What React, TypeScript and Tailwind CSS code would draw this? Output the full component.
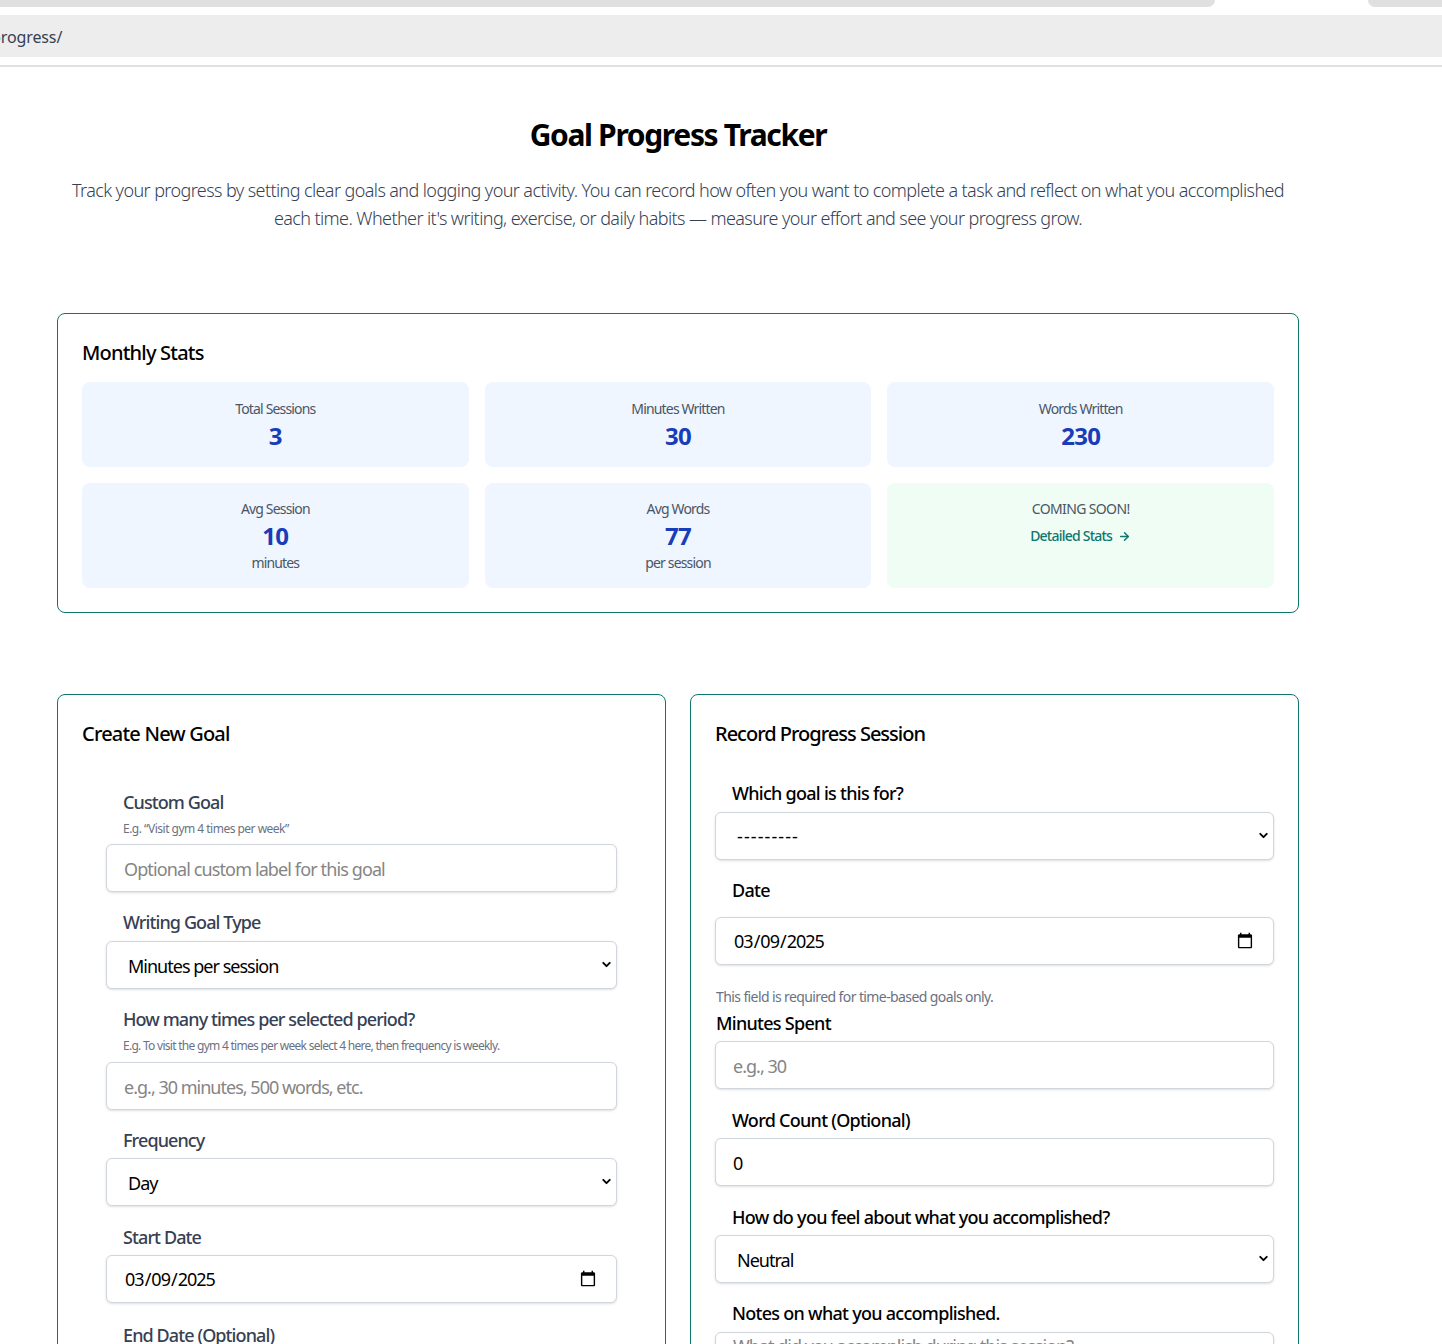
import { ArrowRight, ChevronDown } from "lucide-react";
import type { ReactNode } from "react";

const font = { fontFamily: '"Noto Sans", "Open Sans", sans-serif' };

const fieldBase =
    "block w-full h-12 px-[17px] bg-white border border-gray-300 rounded-md shadow-sm text-[18px] text-black outline-0 placeholder:text-[#858585]";
const fieldClass = `${fieldBase} tracking-[-0.055em]`;
const inputClass = `${fieldClass} pt-[2px]`;

function StatCard({ label, value, sub }: { label: string; value: string; sub?: string }) {
    return (
        <div className={`flex flex-col items-center rounded-lg bg-blue-50 ${sub ? "h-[105px] pt-4" : "h-[85px] pt-[17px]"}`}>
            <div className="text-[14px] leading-5 text-gray-600 tracking-[-0.06em]">{label}</div>
            <div className="mt-[1px] text-[24px] leading-8 font-bold text-blue-800 tracking-[-0.03em]">{value}</div>
            {sub && <div className="mt-[1px] text-[14px] leading-5 text-gray-600 tracking-[-0.06em]">{sub}</div>}
        </div>
    );
}

function Label({ children, className = "" }: { children: ReactNode; className?: string }) {
    return <label className={`block text-[18px] leading-7 font-medium ${className}`}>{children}</label>;
}

function Select({ children, className = "" }: { children: ReactNode; className?: string }) {
    return (
        <div className="relative">
            <select className={`${fieldBase} pl-[21px] appearance-none ${className}`}>{children}</select>
            <ChevronDown className="pointer-events-none absolute right-[4px] top-[17px] h-[13px] w-[13px] text-black" strokeWidth={3.5} />
        </div>
    );
}

function DateInput() {
    return <input type="date" defaultValue="2025-03-09" className={fieldClass} />;
}

function CreateGoal() {
    const label = "pl-[17px] text-gray-700 tracking-[-0.05em]";
    return (
        <section className="h-[800px] rounded-lg border border-[#0f766e] px-[24px] pt-[25px]">
            <h2 className="text-[20px] leading-7 font-medium text-black tracking-[-0.04em]">Create New Goal</h2>
            <div className="mt-[40px] ml-6 w-[511px]">
                <Label className={label}>Custom Goal</Label>
                <p className="mt-[5px] pl-[17px] text-[12px] leading-4 text-gray-500 tracking-[-0.043em]">E.g. “Visit gym 4 times per week”</p>
                <input className={`${fieldBase} tracking-[-0.049em] pt-[2px] mt-[7px]`} placeholder="Optional custom label for this goal" />

                <Label className={`mt-4 ${label}`}>Writing Goal Type</Label>
                <div className="mt-[5px]">
                    <Select className="pt-[2px] tracking-[-0.055em]">
                        <option>Minutes per session</option>
                    </Select>
                </div>

                <Label className={`mt-4 ${label}`}>How many times per selected period?</Label>
                <p className="mt-[5px] pl-[17px] text-[12px] leading-4 text-gray-500 tracking-[-0.06em]">E.g. To visit the gym 4 times per week select 4 here, then frequency is weekly.</p>
                <input className={`${inputClass} mt-2`} placeholder="e.g., 30 minutes, 500 words, etc." />

                <Label className={`mt-4 ${label}`}>Frequency</Label>
                <div className="mt-1">
                    <Select className="pt-[2px] tracking-[-0.055em]">
                        <option>Day</option>
                    </Select>
                </div>

                <Label className={`mt-[17px] ${label}`}>Start Date</Label>
                <div className="mt-1">
                    <DateInput />
                </div>

                <Label className={`mt-[18px] ${label}`}>End Date (Optional)</Label>
            </div>
        </section>
    );
}

function RecordSession() {
    const label = "text-black tracking-[-0.04em]";
    return (
        <section className="h-[800px] rounded-lg border border-[#0f766e] px-[24px] pt-[25px]">
            <h2 className="text-[20px] leading-7 font-medium text-black tracking-[-0.05em]">Record Progress Session</h2>
            <Label className={`mt-[31px] pl-[17px] ${label}`}>Which goal is this for?</Label>
            <div className="mt-[5px]">
                <Select className="tracking-[0.06em]">
                    <option>---------</option>
                </Select>
            </div>

            <Label className={`mt-4 pl-[17px] ${label}`}>Date</Label>
            <div className="mt-[13px]">
                <DateInput />
            </div>

            <p className="mt-[22px] pl-[1px] text-[14px] leading-5 text-gray-500 tracking-[-0.043em]">This field is required for time-based goals only.</p>
            <Label className={`mt-[2px] pl-[1px] ${label}`}>Minutes Spent</Label>
            <input className={`${inputClass} mt-1`} placeholder="e.g., 30" />

            <Label className={`mt-[17px] pl-[17px] ${label}`}>Word Count (Optional)</Label>
            <input className={`${inputClass} mt-1`} defaultValue="0" />

            <Label className={`mt-[17px] pl-[17px] ${label}`}>How do you feel about what you accomplished?</Label>
            <div className="mt-1">
                <Select className="pt-[2px] tracking-[-0.055em]">
                    <option>Neutral</option>
                </Select>
            </div>

            <Label className={`mt-4 pl-[17px] ${label}`}>Notes on what you accomplished.</Label>
            <textarea
                className={`${fieldClass} mt-[5px] h-24 resize-none`}
                placeholder="What did you accomplish during this session?"
            />
        </section>
    );
}

export default function App() {
    return (
        <div className="h-[1344px] overflow-hidden bg-white" style={font}>
            {/* browser chrome */}
            <div className="flex h-[7px]">
                <div className="w-[1215px] rounded-br-lg bg-[#e0e0e0]" />
                <div className="w-[153px]" />
                <div className="flex-1 rounded-bl-lg bg-[#e0e0e0]" />
            </div>
            <div className="mt-2 h-[42px] overflow-hidden bg-[#eeedee] text-[16px] leading-[44px] text-gray-700 tracking-[-0.007em]">
                <span className="block -ml-[9px]">progress/</span>
            </div>
            <div className="mt-2 h-[2px] bg-[#e0e0e0]" />

            <main className="w-[1356px] px-[57px]">
                <h1 className="mt-[50px] text-center text-[30px] leading-9 font-bold text-black tracking-[-0.045em]">Goal Progress Tracker</h1>
                <p className="mx-auto mt-[23px] mb-[81px] w-[1240px] text-center text-[18px] leading-7 font-light text-gray-700 tracking-[-0.033em]">
                    Track your progress by setting clear goals and logging your activity. You can record how often you want to complete a task and reflect on what you accomplished each time. Whether it's writing, exercise, or daily habits — measure your effort and see your progress grow.
                </p>

                <section className="h-[300px] rounded-lg border border-[#0f766e] px-[24px] pt-[25px]">
                    <h2 className="text-[20px] leading-7 font-medium text-black tracking-[-0.04em]">Monthly Stats</h2>
                    <div className="mt-[15px] grid grid-cols-3 gap-4">
                        <StatCard label="Total Sessions" value="3" />
                        <StatCard label="Minutes Written" value="30" />
                        <StatCard label="Words Written" value="230" />
                        <StatCard label="Avg Session" value="10" sub="minutes" />
                        <StatCard label="Avg Words" value="77" sub="per session" />
                        <div className="flex h-[105px] flex-col items-center rounded-lg bg-green-50 pt-4">
                            <div className="text-[14px] leading-5 text-gray-600 tracking-[-0.045em]">COMING SOON!</div>
                            <div className="mt-[7px] flex items-center gap-1.5 text-[14px] leading-5 font-medium text-[#0f766e] tracking-[-0.055em]">
                                Detailed Stats
                                <ArrowRight className="h-[13px] w-[13px]" strokeWidth={2.75} />
                            </div>
                        </div>
                    </div>
                </section>

                <div className="mt-[81px] grid grid-cols-2 gap-6">
                    <CreateGoal />
                    <RecordSession />
                </div>
            </main>
        </div>
    );
}
